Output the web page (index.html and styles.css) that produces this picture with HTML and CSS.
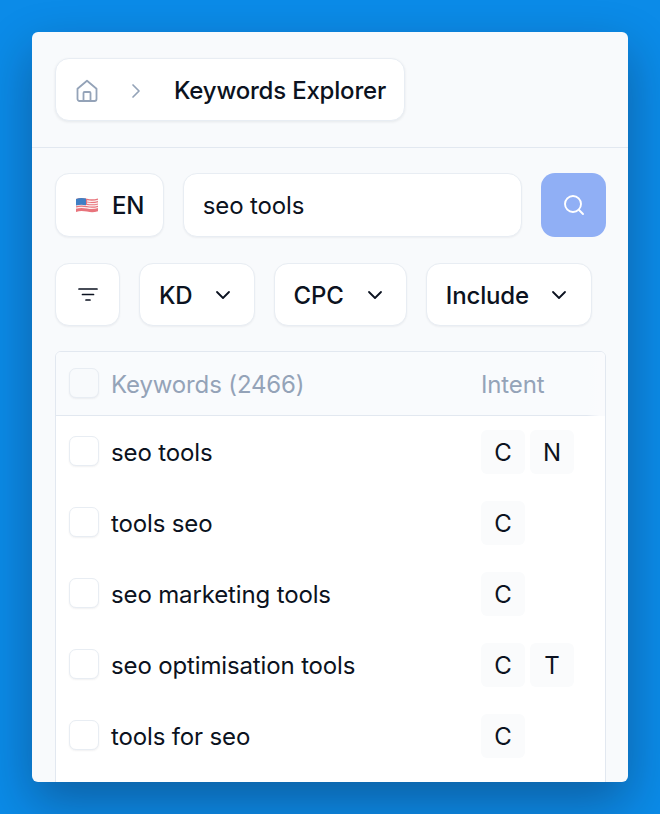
FILE: index.html
```html
<!DOCTYPE html>
<html lang="en">
<head>
<meta charset="utf-8">
<title>Keywords Explorer</title>
<link rel="stylesheet" href="styles.css">
</head>
<body>
<main class="card">
  <header class="top">
    <nav class="crumbs">
      <svg class="home" viewBox="0 0 24 24" width="24" height="24" fill="none" stroke="#94a3b8" stroke-width="1.8" stroke-linecap="round" stroke-linejoin="round"><path d="M2.500 9.800 12 1.800l9.500 8v10.200a2 2 0 0 1-2 2h-15a2 2 0 0 1-2-2z"/><path d="M8.500 22v-8a1 1 0 0 1 1-1h5a1 1 0 0 1 1 1v8"/></svg>
      <svg class="sep" viewBox="0 0 24 24" width="24" height="24" fill="none" stroke="#94a3b8" stroke-width="1.700" stroke-linecap="round" stroke-linejoin="round"><path d="m9 6 6 6-6 6"/></svg>
      <span class="crumb">Keywords Explorer</span>
    </nav>
  </header>
  <section class="body">
    <div class="search">
      <div class="box lang">
        <svg class="flag" viewBox="0 0 24 18" width="24" height="18"><path fill="#e8747c" d="M1 3c4-1.400 7-1 11-.2s7 .8 11-.4v12.800c-4 1.300-7 1.200-11 .4s-7-1-11 .3z"/><path fill="none" stroke="#fbeeee" stroke-width="1.250" d="M12 4.800c4 .8 7 .8 11-.4M12 7.200c4 .8 7 .8 11-.4M1 9.700c4-1.300 7-1 11-.2s7 .8 11-.4M1 12.100c4-1.300 7-1 11-.2s7 .8 11-.4"/><path fill="#3f7fc4" d="M1 3c4-1.400 7-1 10-.4v6.700c-3-.6-6-.9-10 .3z"/></svg>
        <span>EN</span>
      </div>
      <div class="box query">seo tools</div>
      <button class="go" type="button" aria-label="Search">
        <svg viewBox="0 0 24 24" width="24" height="24" fill="none" stroke="#fff" stroke-width="1.900" stroke-linecap="round"><circle cx="11" cy="11" r="8"/><path d="m17 17 4 4"/></svg>
      </button>
    </div>
    <div class="filters">
      <button class="box fbtn icon" type="button" aria-label="Filter">
        <svg viewBox="0 0 24 24" width="24" height="24" fill="none" stroke="#0b1220" stroke-width="1.700" stroke-linecap="round"><path d="M3 6h18M6.500 11.500h11M10 17h4"/></svg>
      </button>
      <button class="box fbtn" type="button">KD<svg class="chev" viewBox="0 0 24 24" width="24" height="24"><path d="m6 9 6 6 6-6"/></svg></button>
      <button class="box fbtn cpc" type="button">CPC<svg class="chev" viewBox="0 0 24 24" width="24" height="24"><path d="m6 9 6 6 6-6"/></svg></button>
      <button class="box fbtn inc" type="button">Include<svg class="chev" viewBox="0 0 24 24" width="24" height="24"><path d="m6 9 6 6 6-6"/></svg></button>
    </div>
    <div class="table">
      <div class="row head">
        <span class="check"></span>
        <span class="kw">Keywords (2466)</span>
        <span class="intent">Intent</span>
      </div>
      <div class="row">
        <span class="check"></span><span class="kw">seo tools</span>
        <span class="intent"><b class="tag">C</b><b class="tag">N</b></span>
      </div>
      <div class="row">
        <span class="check"></span><span class="kw">tools seo</span>
        <span class="intent"><b class="tag">C</b></span>
      </div>
      <div class="row">
        <span class="check"></span><span class="kw">seo marketing tools</span>
        <span class="intent"><b class="tag">C</b></span>
      </div>
      <div class="row">
        <span class="check"></span><span class="kw">seo optimisation tools</span>
        <span class="intent"><b class="tag">C</b><b class="tag">T</b></span>
      </div>
      <div class="row">
        <span class="check"></span><span class="kw">tools for seo</span>
        <span class="intent"><b class="tag">C</b></span>
      </div>
    </div>
  </section>
</main>
</body>
</html>
```
FILE: styles.css
```css
* { box-sizing: border-box; }
html, body { height: 100%; }
body {
  margin: 0;
  padding: 32px;
  overflow: hidden;
  background: #0b8be8;
  font-family: Inter, "Liberation Sans", sans-serif;
  font-size: 24px;
  letter-spacing: -0.14px;
  color: #0b1220;
}
.card {
  width: 596px;
  height: 750px;
  background: #f8fafc;
  border-radius: 6px;
  overflow: hidden;
  box-shadow: 0 20px 50px rgba(20, 10, 20, .33);
}
.top {
  height: 116px;
  padding: 26px 23px 0;
  border-bottom: 1px solid #e2e8f0;
}
.crumbs {
  display: inline-flex;
  align-items: center;
  height: 63px;
  padding: 2px 18px 0 19px;
  background: #fff;
  border: 1px solid #e8edf3;
  border-radius: 14px;
  box-shadow: 0 1px 3px rgba(15, 23, 42, .08);
}
.sep { margin-left: 25px; }
.crumb { margin-left: 26px; font-weight: 500; letter-spacing: -0.2px; }
.body { padding: 25px 22px 0 23px; }
.search { display: flex; gap: 19px; height: 64px; }
.box {
  display: flex;
  align-items: center;
  background: #fff;
  border: 1px solid #e8edf3;
  border-radius: 14px;
  box-shadow: 0 1px 2px rgba(15, 23, 42, .05);
}
.lang { width: 109px; padding-left: 19px; gap: 13px; font-weight: 500; }
.query { width: 340px; padding-left: 19px; }
.go {
  display: flex;
  align-items: center;
  justify-content: center;
  width: 65px;
  padding: 0;
  border: 0;
  border-radius: 14px;
  background: #90aff5;
}
.filters { display: flex; gap: 19px; height: 63px; margin-top: 26px; }
.fbtn {
  padding: 2px 19px 0;
  font: 500 24px Inter, "Liberation Sans", sans-serif;
  letter-spacing: -0.14px;
  color: #0b1220;
}
.fbtn.icon { width: 65px; justify-content: center; padding: 0; }
.inc { padding-right: 20px; }
.chev { margin: -2px 0 0 18px; fill: none; stroke: #0b1220; stroke-width: 1.800; stroke-linecap: round; stroke-linejoin: round; }
.cpc .chev { margin-left: 19px; }
.table {
  position: relative;
  margin-top: 25px;
  height: 460px;
  background: #fff;
  border: 1px solid #e2e8f0;
  border-radius: 6px 6px 0 0;
  overflow: hidden;
}
.table::after {
  content: "";
  position: absolute;
  top: 0;
  right: 0;
  width: 18px;
  height: 64px;
  background: linear-gradient(90deg, rgba(250, 251, 253, 0), #fafbfd 70%);
}
.row { display: flex; align-items: center; height: 71px; padding: 1px 13px 0; }
.head {
  height: 64px;
  background: #f9fbfd;
  border-bottom: 1px solid #e2e8f0;
  color: #94a3b8;
  font-weight: 400;
}
.check {
  flex: none;
  width: 30px;
  height: 30px;
  margin-top: -2px;
  background: #fff;
  border: 1px solid #e8edf3;
  border-radius: 7px;
  box-shadow: 0 1px 2px rgba(15, 23, 42, .06);
}
.head .check { background: #f8fafc; }
.kw { margin-left: 12px; flex: 1; }
.intent { display: flex; gap: 5px; width: 111px; }
.tag {
  display: flex;
  align-items: center;
  justify-content: center;
  width: 44px;
  height: 44px;
  background: #fafbfc;
  border-radius: 6px;
  font-weight: 400;
}
```
